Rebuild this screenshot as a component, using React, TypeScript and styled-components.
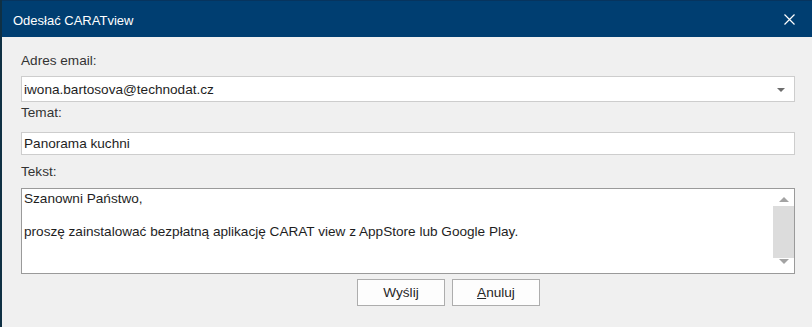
import React from "react";
import styled, { createGlobalStyle } from "styled-components";

const GlobalStyle = createGlobalStyle`
  html, body {
    margin: 0;
    padding: 0;
    background: #f0f0f0;
  }
  * {
    box-sizing: border-box;
  }
`;

const Window = styled.div`
  width: 812px;
  height: 327px;
  display: flex;
  flex-direction: column;
  background: #f0f0f0;
  border-left: 2px solid #0f3044;
  font-family: "Liberation Sans", Arial, sans-serif;
  font-size: 13.6px;
  color: #262626;
  overflow: hidden;
`;

const TitleBar = styled.div`
  height: 37px;
  flex: 0 0 37px;
  margin-left: -2px;
  display: flex;
  align-items: center;
  justify-content: space-between;
  padding: 0 17px 0 13px;
  background: #003e71;
  border-top: 1px solid #07345e;
`;

const Title = styled.span`
  color: #ffffff;
  font-size: 13px;
  padding-top: 2px;
`;

const CloseButton = styled.button`
  width: 12px;
  height: 12px;
  padding: 0;
  border: none;
  background: transparent;
  display: flex;
  align-items: center;
  justify-content: center;
  cursor: pointer;
`;

const Body = styled.div`
  flex: 1;
  display: flex;
  flex-direction: column;
  padding: 0 17px 0 19px;
`;

const Label = styled.div<{ $top: number; $bottom: number }>`
  line-height: 16px;
  height: 16px;
  margin-top: ${(p) => p.$top}px;
  margin-bottom: ${(p) => p.$bottom}px;
  color: #333333;
`;

const Field = styled.div<{ $height: number }>`
  height: ${(p) => p.$height}px;
  display: flex;
  align-items: center;
  justify-content: space-between;
  background: #ffffff;
  border: 1px solid #cdcdcd;
  padding: 0 9px 0 2px;
  color: #1e1e1e;
`;

const DropArrow = styled.span`
  width: 0;
  height: 0;
  border-left: 4px solid transparent;
  border-right: 4px solid transparent;
  border-top: 4px solid #6d6d6d;
  margin-top: 1px;
`;

const TextBox = styled.div`
  height: 86px;
  display: flex;
  background: #ffffff;
  border: 1px solid #9a9a9a;
`;

const TextContent = styled.div`
  flex: 1;
  padding: 2px 2px;
  line-height: 16.5px;
  color: #1e1e1e;
`;

const ScrollBar = styled.div`
  width: 21px;
  display: flex;
  flex-direction: column;
  align-items: center;
  padding-top: 8px;
`;

const ScrollArrow = styled.span<{ $up?: boolean }>`
  width: 0;
  height: 0;
  border-left: 5px solid transparent;
  border-right: 5px solid transparent;
  ${(p) =>
    p.$up
      ? "border-bottom: 5px solid #a3a3a3;"
      : "border-top: 5px solid #a3a3a3;"}
`;

const Thumb = styled.div`
  width: 21px;
  height: 52px;
  margin: 4px 0 1px;
  background: #dcdcdc;
`;

const ButtonRow = styled.div`
  display: flex;
  gap: 7px;
  margin-top: 5px;
  padding-left: 336px;
`;

const Button = styled.button`
  width: 88px;
  height: 27px;
  background: #fdfdfd;
  border: 1px solid #adadad;
  font-family: "Liberation Sans", Arial, sans-serif;
  font-size: 13.6px;
  color: #262626;
  padding: 0;
  cursor: pointer;
`;

export default function App() {
  return (
    <>
      <GlobalStyle />
      <Window>
        <TitleBar>
          <Title>Odesłać CARATview</Title>
          <CloseButton aria-label="Zamknij">
            <svg width="11" height="11" viewBox="0 0 11 11">
              <path d="M0.5 0.5 L10.5 10.5 M10.5 0.5 L0.5 10.5" stroke="#ffffff" strokeWidth="1.2" />
            </svg>
          </CloseButton>
        </TitleBar>
        <Body>
          <Label $top={16} $bottom={7}>Adres email:</Label>
          <Field $height={26}>
            <span>iwona.bartosova@technodat.cz</span>
            <DropArrow />
          </Field>
          <Label $top={3} $bottom={11}>Temat:</Label>
          <Field $height={23}>
            <span>Panorama kuchni</span>
          </Field>
          <Label $top={9} $bottom={8}>Tekst:</Label>
          <TextBox>
            <TextContent>
              Szanowni Państwo,
              <br />
              <br />
              proszę zainstalować bezpłatną aplikację CARAT view z AppStore lub Google Play.
            </TextContent>
            <ScrollBar>
              <ScrollArrow $up />
              <Thumb />
              <ScrollArrow />
            </ScrollBar>
          </TextBox>
          <ButtonRow>
            <Button>Wyślij</Button>
            <Button>
              <u>A</u>nuluj
            </Button>
          </ButtonRow>
        </Body>
      </Window>
    </>
  );
}
